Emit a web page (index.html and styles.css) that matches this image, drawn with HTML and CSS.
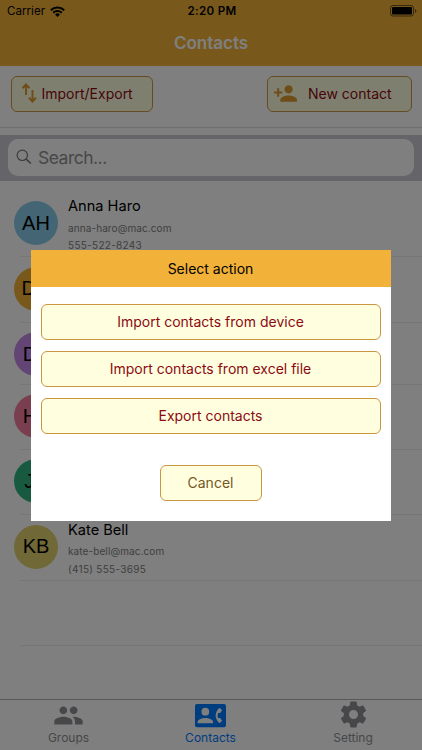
FILE: index.html
```html
<!DOCTYPE html>
<html lang="en">
<head>
<meta charset="utf-8">
<title>Contacts</title>
<link rel="stylesheet" href="styles.css">
</head>
<body>
<div class="app">
  <header class="header">
    <div class="status">
      <div class="carrier"><span>Carrier</span>
        <svg width="15" height="11" viewBox="0 0 15 11" fill="none" stroke="#000" stroke-width="2"><path d="M.8 4.2a9.6 9.6 0 0 1 13.4 0M3.2 6.8a6.2 6.2 0 0 1 8.6 0"/><path d="M5 8.4a3.8 3.8 0 0 1 5 0L7.5 11z" fill="#000" stroke="none"/></svg>
      </div>
      <div class="time">2:20 PM</div>
      <svg class="battery" width="27" height="12" viewBox="0 0 27 12"><rect x=".5" y=".5" width="23" height="10.5" rx="2.5" fill="none" stroke="#000" stroke-opacity=".55"/><rect x="2" y="2" width="20" height="7.5" rx="1"/><path d="M25 4v4q1.4-.5 1.4-2T25 4z" opacity=".55"/></svg>
    </div>
    <h1 class="title">Contacts</h1>
  </header>
  <div class="toolbar">
    <button class="btn import"><svg width="18" height="22" viewBox="0 0 18 22" fill="none" stroke="#dc9a30" stroke-width="2"><path d="M5 13V3.500M1.500 6.200 5 2.500l3.500 3.700M11.500 8v10.500M8 15.800l3.500 3.700 3.500-3.700"/></svg><span>Import/Export</span></button>
    <button class="btn new"><svg width="25" height="25" viewBox="0 0 24 24" fill="#dc9a30"><path d="M15 12c2.210 0 4-1.790 4-4s-1.790-4-4-4-4 1.790-4 4 1.790 4 4 4zm-9-2V7H4v3H1v2h3v3h2v-3h3v-2H6zm9 4c-2.670 0-8 1.340-8 4v2h16v-2c0-2.660-5.330-4-8-4z"/></svg><span>New contact</span></button>
  </div>
  <div class="search"><div class="field"><svg width="16" height="16" viewBox="0 0 16 16" fill="none" stroke="#777" stroke-width="1.200"><circle cx="6.300" cy="6.300" r="5.200"/><path d="m10.200 10.200 4.700 4.300" stroke-width="1.600"/></svg><span>Search...</span></div></div>
  <ul class="list">
    <li class="row first"><div class="avatar sky">AH</div><div class="info"><div class="name">Anna Haro</div><div class="mail">anna-haro@mac.com</div><div class="phone">555-522-8243</div></div></li>
    <li class="row"><div class="avatar gold">DH</div></li>
    <li class="row short"><div class="avatar purple">DT</div></li>
    <li class="row"><div class="avatar pink">HZ</div></li>
    <li class="row"><div class="avatar green">JA</div></li>
    <li class="row"><div class="avatar khaki">KB</div><div class="info"><div class="name">Kate Bell</div><div class="mail">kate-bell@mac.com</div><div class="phone">(415) 555-3695</div></div></li>
    <li class="row"></li>
  </ul>
  <nav class="tabs">
    <div class="tab"><svg width="31" height="31" viewBox="0 0 24 24"><path d="M16 11c1.660 0 2.990-1.340 2.990-3S17.660 5 16 5s-3 1.340-3 3 1.340 3 3 3zm-8 0c1.660 0 2.990-1.340 2.990-3S9.660 5 8 5 5 6.340 5 8s1.340 3 3 3zm0 2c-2.330 0-7 1.170-7 3.500V19h14v-2.500c0-2.330-4.670-3.500-7-3.500zm8 0c-.29 0-.62.020-.97.050 1.160.840 1.970 1.970 1.970 3.450V19h6v-2.500c0-2.330-4.670-3.500-7-3.500z"/></svg><span>Groups</span></div>
    <div class="tab active"><svg width="31" height="31" viewBox="0 0 24 24"><rect y="3" width="24" height="18" rx="1.500"/><g fill="#fff"><circle cx="8" cy="9" r="3"/><path d="M2 18v-1c0-2 4-3.100 6-3.100s6 1.100 6 3.100v1z"/><path d="M17.850 14h1.640L21 16l-1.990 1.990A7.510 7.510 0 0 1 16.280 14a7.200 7.200 0 0 1 0-4 7.470 7.470 0 0 1 2.730-3.990L21 8l-1.510 2h-1.640a5.900 5.900 0 0 0 0 4z"/></g></svg><span>Contacts</span></div>
    <div class="tab"><svg class="gear" width="31" height="31" viewBox="0 0 24 24"><path d="M19.430 12.980c.04-.32.070-.64.070-.98s-.03-.66-.07-.98l2.110-1.650c.19-.15.240-.42.120-.64l-2-3.460c-.12-.22-.39-.3-.61-.22l-2.490 1c-.52-.4-1.080-.73-1.690-.98l-.38-2.650A.49.490 0 0 0 14 2h-4c-.25 0-.46.180-.49.420l-.38 2.650c-.61.250-1.170.59-1.690.98l-2.490-1c-.23-.09-.49 0-.61.220l-2 3.460c-.13.220-.07.490.12.640l2.110 1.650c-.04.320-.07.650-.07.980s.03.660.070.980l-2.110 1.650c-.19.150-.24.420-.12.640l2 3.460c.12.220.39.300.61.220l2.490-1c.52.400 1.080.73 1.690.98l.38 2.650c.03.240.24.420.49.420h4c.25 0 .46-.18.490-.42l.38-2.650c.61-.25 1.170-.59 1.690-.98l2.490 1c.23.090.49 0 .61-.22l2-3.460c.12-.22.070-.49-.12-.64zM12 15.500a3.500 3.500 0 1 1 0-7 3.500 3.500 0 0 1 0 7z"/></svg><span>Setting</span></div>
  </nav>
</div>
<div class="overlay">
  <section class="dialog">
    <h2 class="dialog-title">Select action</h2>
    <div class="actions">
      <button class="btn">Import contacts from device</button>
      <button class="btn">Import contacts from excel file</button>
      <button class="btn">Export contacts</button>
      <button class="btn cancel">Cancel</button>
    </div>
  </section>
</div>
</body>
</html>
```
FILE: styles.css
```css
* { box-sizing: border-box; }
body { margin: 0; font-family: Inter, "Liberation Sans", sans-serif; color: #000; background: #fff; overflow: hidden; }
h1, h2, ul { margin: 0; padding: 0; font-weight: 400; }
svg { display: block; flex: none; }
.app { width: 422px; height: 750px; display: flex; flex-direction: column; background: #fff; }
.header { height: 66px; flex: none; background: #f2b138; }
.status { height: 22px; display: grid; grid-template-columns: 1fr auto 1fr; align-items: center; padding: 0 5px 0 7px; font-size: 11.600px; }
.carrier { display: flex; align-items: center; gap: 5px; }
.time { font-weight: 600; letter-spacing: .3px; }
.battery { justify-self: end; }
.title { height: 43px; line-height: 43px; text-align: center; color: #fff; font-size: 17px; font-weight: 600; }
.toolbar { height: 62px; flex: none; border-bottom: 1px solid #ddd; padding: 9.500px 10.500px 0; display: flex; justify-content: space-between; align-items: flex-start; }
.btn { height: 36px; border: 1px solid #cb9642; border-radius: 6px; background: #ffffe0; color: #8b0a12; font: 400 14px Inter, sans-serif; display: flex; align-items: center; justify-content: center; padding: 0 0 1px; }
.import { width: 142.500px; justify-content: flex-start; padding-left: 9px; gap: 3px; }
.new { width: 144.500px; justify-content: flex-start; padding-left: 5px; gap: 10px; }
.search { height: 46px; flex: none; margin-top: 7px; padding: 4px 8px 5px; background: #cac9d2; }
.field { height: 37px; border-radius: 10px; background: #fff; display: flex; align-items: center; padding: 0 0 1px 8px; gap: 6px; color: #909090; font-size: 17.500px; letter-spacing: -.5px; }
.list { flex: 1; list-style: none; padding-top: 10px; }
.row { height: 65.400px; position: relative; display: flex; padding: 9.500px 0 0 14px; gap: 10px; }
.row::after { content: ""; position: absolute; left: 20px; right: 0; bottom: 0; height: 1px; background: #ececf0; }
.first { height: 66.400px; padding-top: 10px; }
.short { height: 61.800px; }
.avatar { width: 44px; height: 44px; border-radius: 50%; display: flex; align-items: center; justify-content: center; font: 20px "Liberation Sans", sans-serif; }
.sky { background: #88cce8; }
.gold { background: #f2b138; }
.purple { background: #c58ae8; }
.pink { background: #f57f9f; }
.green { background: #2eb57f; }
.khaki { background: #e0d16f; }
.info { margin-top: -5px; }
.name { height: 20.500px; line-height: 21px; font-size: 14.600px; }
.mail { height: 20.500px; line-height: 22px; font-size: 10px; color: #808080; letter-spacing: .1px; }
.phone { height: 16px; line-height: 16px; font-size: 10px; color: #808080; letter-spacing: .3px; }
.tabs { height: 51px; flex: none; border-top: 1px solid #b2b2b2; display: grid; grid-template-columns: 137px 147px 138px; background: #fff; color: #8e8e93; fill: #8e8e93; }
.tab { display: flex; flex-direction: column; align-items: center; font-size: 12px; line-height: 13px; }
.gear { margin: -1px 0 1px; }
.active { color: #007aff; fill: #007aff; }
.overlay { position: absolute; inset: 0; background: rgba(0, 0, 0, .5); display: flex; justify-content: center; align-items: flex-start; padding-top: 250px; }
.dialog { width: 360px; height: 270.500px; margin-right: 1px; background: #fff; }
.dialog-title { height: 37px; line-height: 37px; background: #f2b138; text-align: center; font-size: 14px; }
.actions { padding: 16.500px 10px 0; display: flex; flex-direction: column; gap: 11px; }
.cancel { width: 102px; margin: 20px auto 0; color: #755723; }
```
